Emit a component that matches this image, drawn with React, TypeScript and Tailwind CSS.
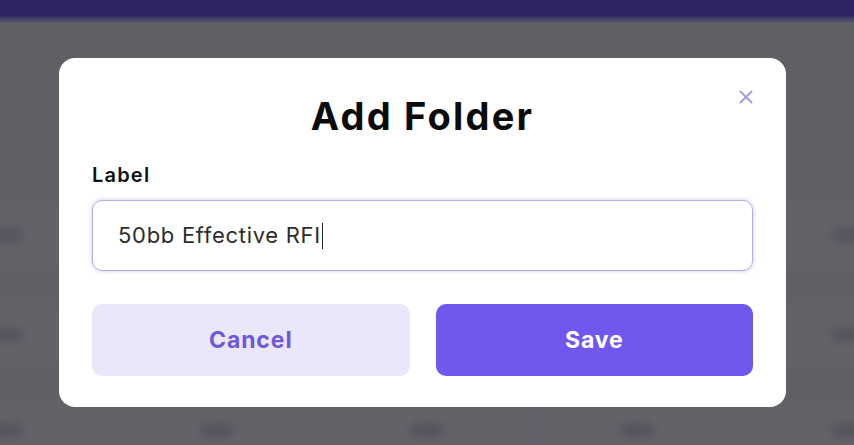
import { X } from 'lucide-react';

const cols = [0, 1, 2, 3, 4];

function BackdropRow({ tall }: { tall?: boolean }) {
  return (
    <div className={`flex shrink-0 gap-[6px] px-[4px] ${tall ? 'h-[70px]' : 'h-[60px]'}`}>
      {cols.map((c) => (
        <div key={c} className="flex-1 bg-[#626369] rounded-md flex items-center justify-center">
          <div className="w-[34px] h-[14px] rounded-full bg-[#54555c]" />
        </div>
      ))}
    </div>
  );
}

export default function App() {
  return (
    <div className="relative w-[854px] h-[445px] overflow-hidden bg-[#5f6066]" style={{ fontFamily: 'Inter, "Open Sans", sans-serif' }}>
      {/* blurred page behind the dialog */}
      <div className="absolute inset-0 flex flex-col">
        <div className="h-[15px] shrink-0 bg-[#2d2461]" />
        <div className="h-[8px] shrink-0 bg-gradient-to-b from-[#2d2461] to-[#5c5e66]" />
        <div className="flex flex-col gap-[30px] pt-[177px] -mx-[100px] blur-[4px]">
          <BackdropRow tall />
          <BackdropRow tall />
          <BackdropRow />
        </div>
      </div>

      {/* overlay */}
      <div className="relative flex pt-[58px] pl-[59px]">
        <div className="w-[727px] h-[349px] bg-white rounded-[16px] px-[33px] pt-[30px] relative">
          <button className="absolute top-[28px] right-[29px] text-[#a69de0]">
            <X size={22} strokeWidth={2.2} />
          </button>
          <h1 className="text-center text-[38px] font-bold text-[#0b0b0c] leading-[56px] tracking-[2.2px]">Add Folder</h1>
          <label className="block mt-[20px] text-[20px] font-semibold text-[#111] leading-[22px] tracking-[1.2px]">Label</label>
          <div className="mt-[14px] h-[71px] rounded-[10px] border border-[#b5ade3] shadow-[0_0_4px_rgba(140,125,220,0.45)] flex items-center pl-[25px] text-[22px] text-[#2c2c2c] tracking-[0.7px]">
            50bb Effective RFI
            <span className="ml-[1px] inline-block w-[1px] h-[26px] bg-[#222]" />
          </div>
          <div className="mt-[33px] flex gap-[26px]">
            <button className="flex-1 h-[72px] rounded-[10px] bg-[#ebe7fb] text-[#6f58d8] text-[23px] font-bold tracking-[0.9px]">Cancel</button>
            <button className="flex-1 h-[72px] rounded-[10px] bg-[#7257ee] text-white text-[23px] font-bold tracking-[0.8px]">Save</button>
          </div>
        </div>
      </div>
    </div>
  );
}
